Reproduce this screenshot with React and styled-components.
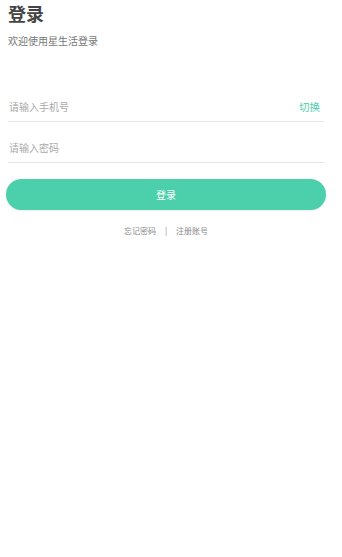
import styled, { createGlobalStyle } from "styled-components";

const GlobalStyle = createGlobalStyle`
  html, body {
    margin: 0;
    padding: 0;
    background: #fff;
    font-family: "Noto Sans CJK SC", "Noto Sans", sans-serif;
  }
`;

const Page = styled.div`
  width: 342px;
  min-height: 557px;
  box-sizing: border-box;
  padding: 1px 18px 0 8px;
`;

const Title = styled.h1`
  margin: 0;
  font-size: 18px;
  line-height: 24px;
  font-weight: 700;
  color: #444;
`;

const Subtitle = styled.p`
  margin: 8px 0 0;
  font-size: 10px;
  line-height: 16px;
  color: #777;
`;

const Form = styled.div`
  margin-top: 32px;
  display: flex;
  flex-direction: column;
`;

const Field = styled.div`
  display: flex;
  align-items: center;
  justify-content: space-between;
  box-sizing: border-box;
  height: 41px;
  padding: 11px 4px 0 1px;
  border-bottom: 1px solid #e6e6e6;
`;

const Input = styled.input`
  border: none;
  outline: none;
  background: transparent;
  padding: 0;
  font-family: inherit;
  font-size: 10px;
  color: #333;
  flex: 1;
  &::placeholder {
    color: #aaa;
  }
`;

const Switch = styled.span`
  font-size: 10.5px;
  color: #4ecdab;
`;

const LoginButton = styled.button`
  margin: 16px -2px 0 -2px;
  height: 31px;
  border: none;
  border-radius: 16px;
  background: #4ccfab;
  color: #fff;
  font-family: inherit;
  font-size: 10px;
  box-shadow: 0 1px 2px rgba(0, 0, 0, 0.08);
`;

const Links = styled.div`
  margin-top: 15px;
  display: flex;
  justify-content: center;
  align-items: center;
  gap: 9px;
  font-size: 8px;
  color: #888;
`;

export default function App() {
  return (
    <>
      <GlobalStyle />
      <Page>
        <Title>登录</Title>
        <Subtitle>欢迎使用星生活登录</Subtitle>
        <Form>
          <Field>
            <Input placeholder="请输入手机号" />
            <Switch>切换</Switch>
          </Field>
          <Field>
            <Input type="password" placeholder="请输入密码" />
          </Field>
          <LoginButton>登录</LoginButton>
          <Links>
            <span>忘记密码</span>
            <span>|</span>
            <span>注册账号</span>
          </Links>
        </Form>
      </Page>
    </>
  );
}
